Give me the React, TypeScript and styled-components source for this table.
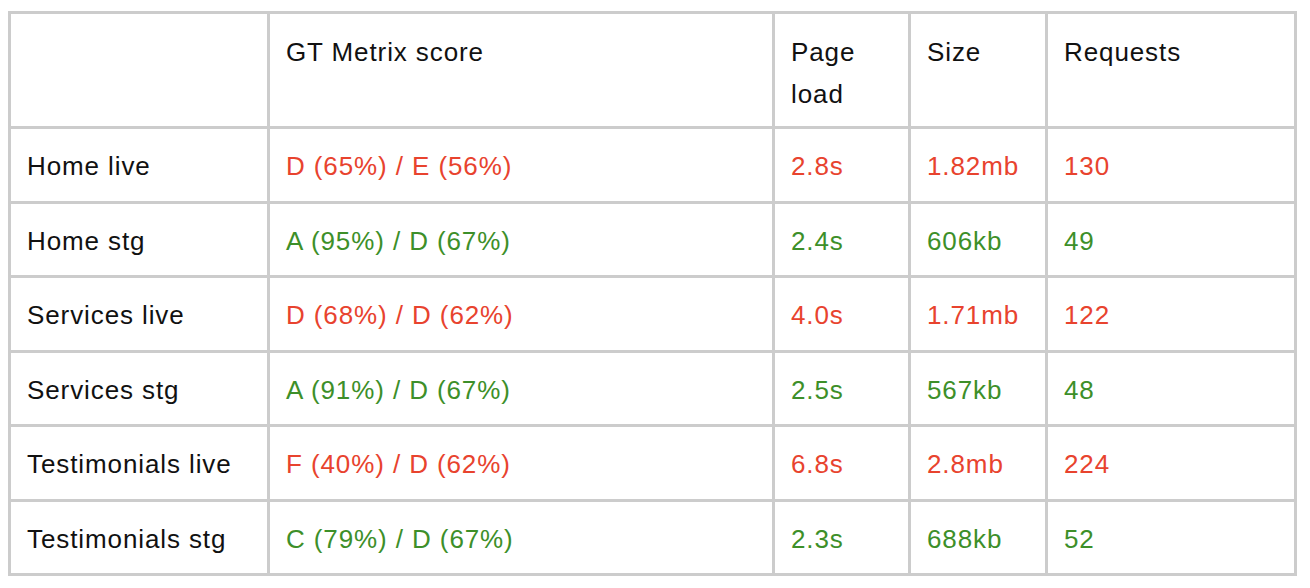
import * as React from 'react';
import styled, { createGlobalStyle } from 'styled-components';

type Row = {
  page: string,
  score: string,
  load: string,
  size: string,
  requests: string,
  good: boolean,
};

const rows: Row[] = [
  { page: 'Home live', score: 'D (65%) / E (56%)', load: '2.8s', size: '1.82mb', requests: '130', good: false },
  { page: 'Home stg', score: 'A (95%) / D (67%)', load: '2.4s', size: '606kb', requests: '49', good: true },
  { page: 'Services live', score: 'D (68%) / D (62%)', load: '4.0s', size: '1.71mb', requests: '122', good: false },
  { page: 'Services stg', score: 'A (91%) / D (67%)', load: '2.5s', size: '567kb', requests: '48', good: true },
  { page: 'Testimonials live', score: 'F (40%) / D (62%)', load: '6.8s', size: '2.8mb', requests: '224', good: false },
  { page: 'Testimonials stg', score: 'C (79%) / D (67%)', load: '2.3s', size: '688kb', requests: '52', good: true },
];

const columns = [259, 505, 136, 137, 249];

export default function App () {
  return (
    <>
      <GlobalStyle />
      <MetricsTable>
        <colgroup>
          {columns.map((w, i) => <col key={i} style={{ width: w }} />)}
        </colgroup>
        <thead>
          <tr>
            <HeadCell />
            <HeadCell>GT Metrix score</HeadCell>
            <HeadCell>Page<br />load</HeadCell>
            <HeadCell>Size</HeadCell>
            <HeadCell>Requests</HeadCell>
          </tr>
        </thead>
        <tbody>
          {rows.map((row) => (
            <tr key={row.page}>
              <Cell>{row.page}</Cell>
              <Cell $good={row.good}>{row.score}</Cell>
              <Cell $good={row.good}>{row.load}</Cell>
              <Cell $good={row.good}>{row.size}</Cell>
              <Cell $good={row.good}>{row.requests}</Cell>
            </tr>
          ))}
        </tbody>
      </MetricsTable>
    </>
  );
}

const GlobalStyle = createGlobalStyle`
  body {
    margin: 0;
    padding: 11px 8px;
    background: #FFFFFF;
    font-family: 'Liberation Sans', Arial, sans-serif;
  }
`;

const MetricsTable = styled.table`
  border-collapse: collapse;
  table-layout: fixed;
  width: 1289px;
  font-size: 26px;
  line-height: 41.5px;
  letter-spacing: 0.9px;
  color: #111111;
`;

const HeadCell = styled.th`
  border: 3px solid #CCCCCC;
  padding: 18px 16px 11px;
  text-align: left;
  vertical-align: top;
  font-weight: normal;
`;

const Cell = styled.td<{ $good?: boolean }>`
  border: 3px solid #CCCCCC;
  padding: 17px 16px 13px;
  text-align: left;
  vertical-align: middle;
  white-space: nowrap;
  color: ${({ $good }) => $good === undefined ? '#111111' : $good ? '#3D8F29' : '#E8432E'};
`;
